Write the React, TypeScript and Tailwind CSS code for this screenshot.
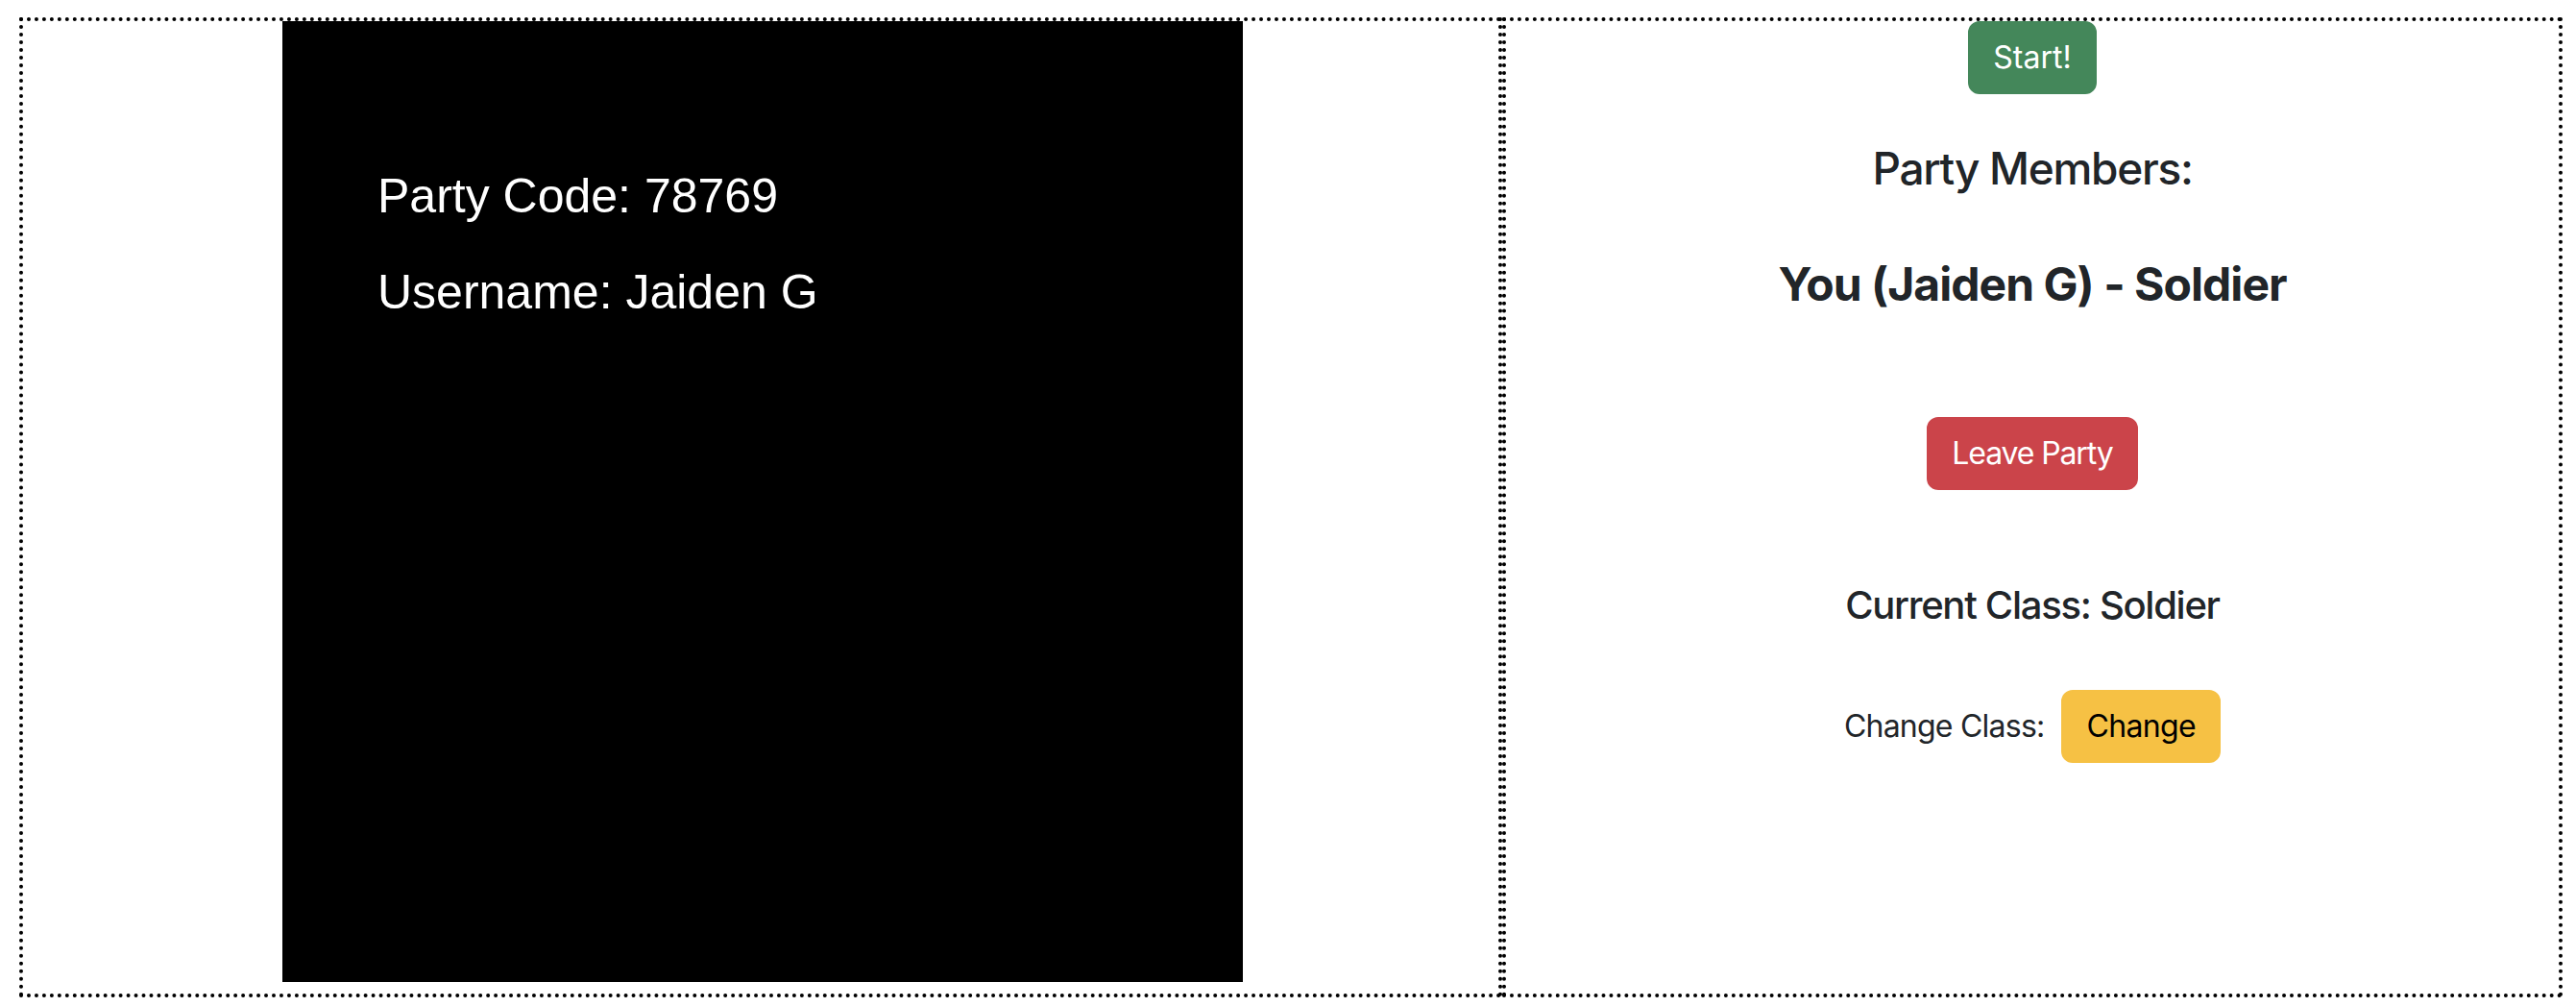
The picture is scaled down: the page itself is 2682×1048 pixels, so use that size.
import React from 'react';

const App: React.FC = () => {
  const username = 'Jaiden G';
  const partyCode = '78769';
  const currentClass = 'Soldier';

  return (
    <div className="flex items-start pt-[18px] pl-[20px] bg-white">
      <div className="flex">
        {/* Left: game canvas */}
        <div className="w-[1544px] border-4 border-dotted border-black flex justify-center pl-[4px] pb-[12px]">
          <div className="w-[1000px] h-[1000px] bg-black pt-[132px] pl-[99px] text-white font-['Liberation_Sans',Arial,sans-serif] text-[50px]">
            <div className="leading-[100px]">Party Code: {partyCode}</div>
            <div className="leading-[100px]">Username: {username}</div>
          </div>
        </div>

        {/* Right: lobby */}
        <div className="w-[1104px] border-4 border-dotted border-black flex flex-col items-center text-[#212529] font-['Inter',sans-serif]">
          <button className="h-[76px] px-[24px] rounded-[12px] border-2 border-[#44875a] bg-[#44875a] text-white text-[32px] leading-[48px]">
            Start!
          </button>
          <h4 className="mt-[50px] text-[46px] leading-[55px] font-medium tracking-[-0.028em]">Party Members:</h4>
          <h4 className="mt-[64px] text-[48px] leading-[58px] font-bold tracking-[-0.02em]">
            You ({username}) - {currentClass}
          </h4>
          <button className="mt-[109px] h-[76px] px-[24px] rounded-[12px] border-2 border-[#cb444a] bg-[#cb444a] text-white text-[32px] leading-[48px] tracking-[-0.035em]">
            Leave Party
          </button>
          <h5 className="mt-[96px] text-[40px] leading-[48px] font-medium tracking-[-0.032em]">
            Current Class: {currentClass}
          </h5>
          <div className="mt-[64px] flex items-center gap-[18px]">
            <span className="text-[32px] tracking-[-0.024em]">Change Class:</span>
            <button className="h-[76px] px-[24px] rounded-[12px] border-2 border-[#f6c144] bg-[#f6c144] text-black text-[32px] leading-[48px] tracking-[-0.02em]">
              Change
            </button>
          </div>
        </div>
      </div>
    </div>
  );
};

export default App;
